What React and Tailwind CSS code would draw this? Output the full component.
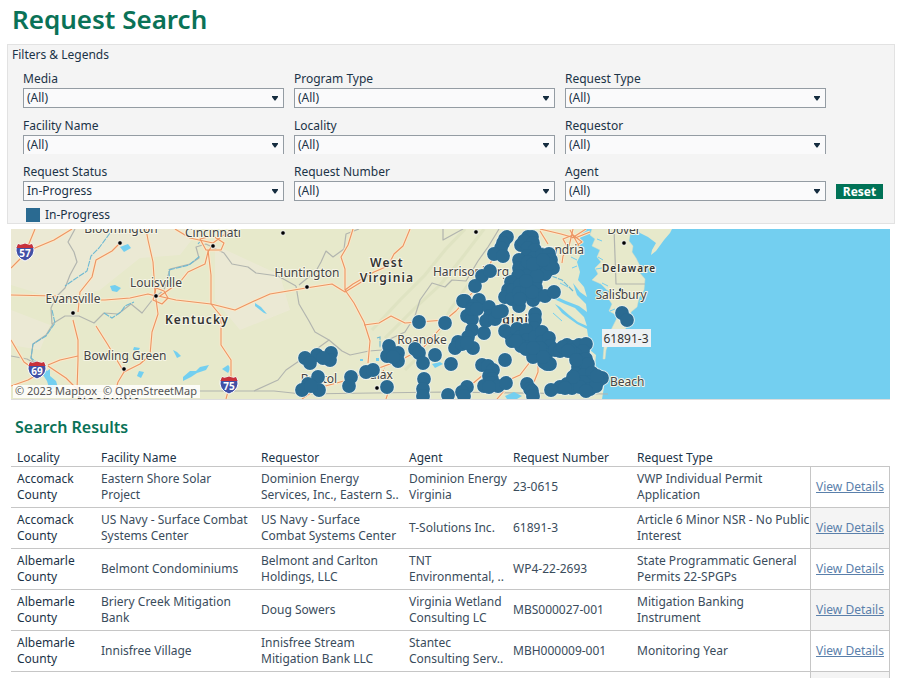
import React from "react";

const FILTERS = [
  { id: "media", label: "Media", value: "(All)" },
  { id: "program-type", label: "Program Type", value: "(All)" },
  { id: "request-type", label: "Request Type", value: "(All)" },
  { id: "facility", label: "Facility Name", value: "(All)", open: true },
  { id: "locality", label: "Locality", value: "(All)", open: true },
  { id: "requestor", label: "Requestor", value: "(All)", open: true },
  { id: "status", label: "Request Status", value: "In-Progress" },
  { id: "number", label: "Request Number", value: "(All)" },
  { id: "agent", label: "Agent", value: "(All)" },
];

const ROWS = [
  ["Accomack County", "Eastern Shore Solar Project", "Dominion Energy Services, Inc., Eastern S..", "Dominion Energy Virginia", "23-0615", "VWP Individual Permit Application"],
  ["Accomack County", "US Navy - Surface Combat Systems Center", "US Navy - Surface Combat Systems Center", "T-Solutions Inc.", "61891-3", "Article 6 Minor NSR - No Public Interest"],
  ["Albemarle County", "Belmont Condominiums", "Belmont and Carlton Holdings, LLC", "TNT Environmental, ..", "WP4-22-2693", "State Programmatic General Permits 22-SPGPs"],
  ["Albemarle County", "Briery Creek Mitigation Bank", "Doug Sowers", "Virginia Wetland Consulting LC", "MBS000027-001", "Mitigation Banking Instrument"],
  ["Albemarle County", "Innisfree Village", "Innisfree Stream Mitigation Bank LLC", "Stantec Consulting Serv..", "MBH000009-001", "Monitoring Year"],
];

const HEADERS = ["Locality", "Facility Name", "Requestor", "Agent", "Request Number", "Request Type"];

const DOTS = [
  [419, 322], [445, 323], [389, 346], [387, 356], [398, 353], [398, 361], [393, 357], [415, 349], [419, 353], [423, 363], [435, 355],
  [424, 379], [423, 389], [423, 396], [305, 358], [317, 355], [310, 363], [331, 353], [330, 360], [323, 358], [318, 377], [308, 384],
  [302, 390], [319, 390], [311, 386], [351, 377], [349, 386], [366, 372], [373, 370], [387, 387],
  [507, 237], [505, 239], [503, 243], [501, 248], [494, 254], [503, 256], [482, 276], [490, 271], [475, 286],
  [463, 301], [465, 301], [479, 300], [473, 306], [467, 316], [472, 319], [472, 309], [477, 309], [472, 330], [484, 333], [468, 337], [473, 348], [458, 342], [455, 348], [462, 344], [467, 343], [451, 364],
  [489, 307], [502, 311], [490, 316], [486, 321], [495, 319], [498, 312],
  [528, 237], [532, 237], [521, 245], [524, 241], [533, 243], [528, 248], [535, 250], [527, 256], [519, 260], [519, 268], [526, 267], [534, 258], [542, 255],
  [549, 254], [551, 260], [553, 268], [548, 270], [541, 264], [534, 270], [541, 272], [527, 276], [518, 276], [511, 282], [508, 290], [505, 297], [513, 290],
  [512, 299], [520, 285], [519, 293], [528, 284], [536, 280], [536, 288], [527, 294], [519, 306], [533, 300], [538, 295], [545, 296], [554, 292], [545, 274],
  [549, 264], [537, 276], [528, 262], [533, 264], [527, 288], [532, 292], [520, 299], [526, 281], [543, 260],
  [535, 314], [535, 320], [534, 328], [505, 331], [510, 334], [512, 341], [517, 329], [520, 337], [526, 330], [527, 340], [521, 346], [529, 347], [535, 337],
  [542, 332], [542, 342], [549, 338], [550, 346], [542, 350], [536, 354], [533, 357], [546, 355], [550, 364], [544, 362], [555, 350], [560, 351], [567, 345],
  [516, 341], [526, 349], [540, 348], [547, 364], [543, 357], [533, 348],
  [563, 347], [573, 347], [579, 345], [586, 344], [583, 351], [575, 354], [580, 360], [586, 359], [570, 350], [578, 367], [585, 367], [588, 364], [576, 374],
  [584, 375], [592, 373], [602, 378], [598, 381], [591, 382], [583, 382], [574, 381], [567, 384], [572, 388], [580, 387], [590, 389], [596, 386], [560, 387], [551, 390],
  [568, 351], [576, 360], [573, 377], [586, 391], [565, 388], [597, 376],
  [505, 360], [482, 365], [488, 366], [493, 370], [489, 376], [492, 379], [484, 386], [491, 383], [498, 386], [506, 383], [489, 387],
  [527, 384], [530, 389], [532, 391], [533, 396], [467, 387], [462, 392], [448, 395], [464, 396],
  [622, 313], [627, 320],
];

const ROADS = [
  "M11 268 L22 257 L35 248 L54 240 L72 229", "M35 229 L28 246", "M11 295 L55 296 L77 300 L105 300 L130 298 L148 294 L156 296",
  "M146 229 L148 240 L153 262 L155 292 L158 314 L152 332 L150 355 L140 364 L124 372 L118 382 L113 399",
  "M120 243 L112 251 L96 260 L92 277 L80 292 L78 312", "M73 320 L78 340 L78 360 L77 390 L84 399", "M96 326 L108 345 L118 362 L124 372",
  "M11 340 L24 362 L38 372", "M48 365 L60 360 L78 356", "M48 366 L66 378 L78 390", "M11 386 L28 380 L42 372",
  "M158 296 L176 300 L211 304 L235 310 L252 302 L270 294 L306 288 L332 284 L345 292 L363 281",
  "M160 296 L180 282 L188 272 L205 264 L208 252 L213 244", "M156 288 L164 291 L168 298 L162 304 L153 300 Z",
  "M208 250 L211 275 L211 304 L221 316 L221 345 L231 360 L231 380 L226 399", "M200 239 L213 236 L224 243 L221 250 L206 250 Z",
  "M213 243 L190 238 L175 229", "M213 243 L232 229",
  "M345 290 L353 284 L374 272 L388 266 L394 254 L403 246 L410 229",
  "M353 229 L348 245 L341 257 L345 269 L345 290 L354 303 L364 322 L370 341 L368 363",
  "M364 325 L379 323 L391 316 L405 323 L419 322 L445 320 L456 311 L480 284 L498 248",
  "M445 323 L423 348 L401 360 L368 372 L344 381 L318 388 L302 399", "M386 399 L391 384 L383 370",
  "M540 229 L561 234 L575 238 L590 232", "M540 231 L548 244", "M573 229 L571 238 L568 250 L563 256 L562 263", "M563 239 L573 235 L582 242 L569 250 Z", "M572 238 L586 229", "M570 230 L579 246",
  "M530 362 L520 375 L511 379", "M504 391 L497 399", "M538 363 L538 372 L534 382", "M458 399 L471 385 L489 370",
];

const BORDERS = [
  "M75 229 L68 242 L74 252 L77 262 L70 275 L65 288 L56 297 L51 308 L52 324 L65 316 L79 316 L94 323 L104 313 L118 314 L131 304 L142 313 L153 299 L164 290 L170 269 L190 264 L199 258 L196 247 L206 244 L224 253 L232 264 L248 267 L256 273 L278 276 L296 286",
  "M11 356 L27 359 L36 364", "M53 324 L46 335 L33 344 L31 358 L38 370", "M38 392 L131 391 L274 391 L302 394 L444 392 L608 394",
  "M296 286 L299 304 L309 321 L315 332 L329 340 L318 348 L286 370 L278 380 L254 391",
  "M299 285 L316 271 L321 262 L326 251 L333 257 L344 249 L346 234 L359 229",
  "M329 340 L342 351 L350 355 L369 351 L382 350 L390 339 L405 332 L415 316 L420 300 L432 283 L445 287 L452 280 L466 281 L478 261 L488 247 L496 234 L499 229",
  "M443 229 L443 240 L463 229", "M614 228 L616 284 L645 284",
];

const RIVERS = [
  "M110 233 L99 248 L91 256 L87 271 L75 279 L65 286", "M52 310 L55 323 L46 336 L33 344 L31 358 L45 369",
  "M170 284 L169 270 L189 265 L200 256", "M104 313 L112 318 L121 312 L125 306 L134 302", "M198 244 L202 239",
  "M377 338 L380 337 L380 348", "M390 363 L384 368", "M573 291 L562 280 L549 275",
];

const LAKES = [
  "M120 247 l8 -3 l3 4 l-7 4 z", "M110 286 l5 -1 l6 3 l-4 4 l-5 -1 z", "M42 367 l5 4 l3 -2 l0 7 l6 5 l3 10 l-5 -3 l-4 3 l-3 -10 l-4 -6 z",
  "M173 350 l4 2 l4 4 l-4 2 z", "M183 377 l7 -6 l6 0 l4 -4 l9 -2 l-3 5 l-9 3 l-6 4 l-8 4 z", "M139 371 l5 1 l-3 6 l-4 -2 z",
  "M222 369 l6 -4 l3 3 l-3 5 z", "M255 303 l6 4 l6 7 l-3 -1 l-9 -7 z", "M432 364 l8 -2 l3 2 l-8 4 z", "M134 347 l6 1 l-2 3 l-5 -1 z",
  "M376 358 l3 0 l0 3 l-3 0 z", "M505 396 l9 -4 l8 4 l-5 3 l-10 0 z", "M360 359 l3 0 l0 2 l-3 0 z", "M384 349 l4 0 l-1 3 l-3 0 z",
];

const CITIES = [
  [120, 243], [213, 246], [283, 233], [156, 296], [73, 313], [124, 369], [307, 287], [377, 388], [476, 232], [624, 243], [621, 290],
];

const LABELS = [
  [121, 233, "Bloomington"], [213, 237, "Cincinnati"], [156, 287, "Louisville"], [73, 303, "Evansville"], [125, 360, "Bowling Green"],
  [307, 277, "Huntington"], [422, 344, "Roanoke"], [471, 276, "Harrisonburg"], [554, 254, "Alexandria"], [624, 234, "Dover"],
  [621, 299, "Salisbury"], [319, 383, "Bristol"], [377, 379, "Galax"],
];

const SHIELDS = [[25, 252, "57"], [37, 370, "69"], [229, 385, "75"]];

function Filter({ id, label, value, open }) {
  return (
    <div className="flex min-w-0 flex-col">
      <label htmlFor={id} className="h-[18px] text-[12px] leading-[18px]">
        {label}
      </label>
      <div className="relative">
        <select
          id={id}
          defaultValue={value}
          className={`block w-full appearance-none rounded-none border border-[#949ca3] bg-[#fafafb] pl-[3px] text-[12px] leading-[18px] ${open ? "h-[19px] border-b-0" : "h-5"}`}
        >
          <option>{value}</option>
        </select>
        <svg className="pointer-events-none absolute right-[6px] top-2 h-[5px] w-[6px]" viewBox="0 0 6 5">
          <path d="M0 0h6v1L3.5 4.5h-1L0 1z" fill="#152c3f" />
        </svg>
      </div>
    </div>
  );
}

function VirginiaMap() {
  return (
    <svg
      viewBox="11 229 879 170"
      preserveAspectRatio="xMidYMid slice"
      role="img"
      aria-label="Map of requests"
      className="block h-[170px] w-full"
      fontFamily="'Noto Sans', sans-serif"
    >
      <rect x="11" y="229" width="879" height="170" fill="#e7e9cb" />
      <g fill="#efeadb" opacity=".6">
        <path d="M11 229 H200 L180 255 L140 258 L100 290 L60 300 L11 285 Z" />
        <path d="M215 245 L280 275 L290 310 L240 330 L215 300 Z" />
        <path d="M11 310 L50 325 L40 350 L11 345 Z" />
      </g>
      <g fill="none" stroke="#d8deba" strokeWidth="3" opacity=".5">
        <path d="M372 330 L400 300 L425 275 L445 250 L465 229" />
        <path d="M385 338 L415 308 L440 285 L462 258 L484 229" />
        <path d="M405 370 L435 340 L450 310 L475 275" />
      </g>
      <path
        fill="#73cff0"
        d="M890 229 H583 L580 238 L577 246 L581 254 L577 262 L580 272 L578 280 L584 287 L587 297 L580 292 L573 283 L577 295 L586 304 L587 312 L579 306 L566 301 L555 296 L554 299 L565 304 L575 308 L584 317 L587 326 L578 322 L569 315 L560 307 L555 304 L562 313 L570 319 L577 324 L587 329 L588 336 L592 342 L590 350 L596 355 L595 365 L602 375 L604 387 L602 399 H890 Z"
      />
      <path
        fill="#e7e9cb"
        stroke="#d8dfc4"
        strokeWidth=".5"
        d="M592 229 L590 235 L595 239 L592 246 L600 250 L597 257 L601 262 L595 268 L598 274 L592 280 L601 284 L607 290 L613 292 L608 298 L612 304 L609 311 L618 316 L614 324 L610 332 L606 340 L604 347 L603 359 L605 359 L606 350 L609 342 L616 336 L624 331 L630 321 L631 312 L637 307 L639 298 L644 290 L645 279 L639 272 L640 266 L636 258 L632 252 L633 246 L629 241 L631 229 Z"
      />
      <path fill="#e7e9cb" d="M637 229 L640 233 L648 237 L656 243 L652 250 L651 255 L656 251 L664 240 L670 233 L672 229 Z" />
      <g fill="none" stroke="#73cff0" strokeWidth="1">
        <path d="M598 257 l5 3 M596 269 l6 -1 M602 283 l6 3 M610 311 l5 -2 M572 268 l5 -2 M571 257 l6 3 M562 321 l-9 -8 M560 283 l8 4 M597 239 l5 2" />
      </g>
      <g fill="none" stroke="#b2b5af" strokeWidth="1.2" strokeLinejoin="round">
        {BORDERS.map((d) => <path key={d} d={d} />)}
      </g>
      <g fill="none" stroke="#6db9d3" strokeWidth="1.1" strokeDasharray="6 1">
        {RIVERS.map((d) => <path key={d} d={d} />)}
      </g>
      <g fill="#73cff0">
        {LAKES.map((d) => <path key={d} d={d} />)}
      </g>
      <g fill="none" stroke="#fbe8c9" strokeWidth="3" strokeLinejoin="round">
        {ROADS.map((d) => <path key={d} d={d} />)}
      </g>
      <g fill="none" stroke="#ec9563" strokeWidth="1.1" strokeLinejoin="round">
        {ROADS.map((d) => <path key={d} d={d} />)}
      </g>
      {CITIES.map(([x, y]) => (
        <circle key={`${x}-${y}`} cx={x} cy={y} r="2.3" fill="#000" stroke="#fff" strokeWidth=".8" />
      ))}
      <g fontSize="12" fill="#444" textAnchor="middle" stroke="#f6f5e6" strokeWidth="2" paintOrder="stroke" strokeLinejoin="round">
        {LABELS.map(([x, y, name]) => <text key={name} x={x} y={y}>{name}</text>)}
        <text x="610" y="386" textAnchor="start">Beach</text>
      </g>
      <g fontWeight="600" fill="#333" textAnchor="middle" stroke="#f6f5e6" strokeWidth="2" paintOrder="stroke">
        <text x="197" y="324" fontSize="12" className="tracking-widest">Kentucky</text>
        <text x="387" y="267" fontSize="12" className="tracking-widest">West</text>
        <text x="387" y="282" fontSize="12" className="tracking-widest">Virginia</text>
        <text x="510" y="324" fontSize="12" className="tracking-widest">Virginia</text>
        <text x="629" y="272" fontSize="10" className="tracking-widest">Delaware</text>
        <text x="109" y="405" fontSize="12" className="tracking-widest">Nashville</text>
      </g>
      {SHIELDS.map(([x, y, n]) => (
        <g key={n} transform={`translate(${x} ${y})`}>
          <path d="M-7 -8 Q-4 -6.500 0 -8.500 Q4 -6.500 7 -8 Q9.500 -5 9 -1 Q8 6 0 9 Q-8 6 -9 -1 Q-9.500 -5 -7 -8Z" fill="#4150a5" stroke="#fff" strokeWidth="1" />
          <path d="M-7 -8 Q-4 -6.500 0 -8.500 Q4 -6.500 7 -8 L8.500 -4 H-8.500Z" fill="#c9313a" />
          <text y="5" fontSize="10" fontWeight="700" fill="#fff" textAnchor="middle">{n}</text>
        </g>
      ))}
      <g fill="#e9f1f0">
        {DOTS.map(([x, y]) => <circle key={`${x}-${y}`} cx={x} cy={y} r="7.8" />)}
      </g>
      <g fill="#2a6a91">
        {DOTS.map(([x, y]) => <circle key={`${x}-${y}`} cx={x} cy={y} r="6.9" />)}
      </g>
      <rect x="602" y="329" width="49" height="18" fill="#edf1f4" />
      <text x="626" y="343" fontSize="12" fill="#333" textAnchor="middle">61891-3</text>
      <rect x="13" y="385" width="187" height="13" fill="#fff" opacity=".85" />
      <text x="15" y="395" fontSize="11" fill="#555">© 2023 Mapbox</text>
      <text x="103" y="395" fontSize="11" fill="#555">© OpenStreetMap</text>
    </svg>
  );
}

export default function App() {
  return (
    <main className="bg-white font-['Noto_Sans',sans-serif] text-[#1b3347]">
      <h1 className="h-11 pl-3 text-[26px] font-semibold leading-[38px] text-[#0a7257]">Request Search</h1>

      <section className="ml-[7px] mr-[6px] border border-[#e2e2e2] bg-[#f4f4f4]">
        <h2 className="pl-1 text-[12px] leading-[20px]">Filters &amp; Legends</h2>
        <div className="flex items-end gap-[10px] pl-[15px] pr-[11px] pt-[5px]">
          <div className="grid flex-1 grid-cols-3 gap-x-[10px] gap-y-[9px]">
            {FILTERS.map((f) => <Filter key={f.id} {...f} />)}
          </div>
          <button type="button" className="mb-[2px] h-[15px] w-[47px] bg-[#007256] text-[12px] font-bold leading-[15px] text-white">
            Reset
          </button>
        </div>
        <div className="flex h-[22px] items-end gap-[5px] pl-[18px] text-[12px] leading-[16px]">
          <span className="mb-px h-[14px] w-[14px] bg-[#2a6a91]" />
          <span>In-Progress</span>
        </div>
      </section>

      <section className="ml-[11px] mr-[11px] mt-[5px] border-b border-[#ddd]">
        <VirginiaMap />
      </section>

      <section className="mx-[11px] pt-[15px]">
        <h2 className="pl-1 text-[16px] font-semibold leading-[24px] text-[#0a7257]">Search Results</h2>
        <table className="mt-2 w-full table-fixed border-collapse text-left text-[12px] leading-[16px]">
          <colgroup>
            <col className="w-[84px]" />
            <col className="w-[160px]" />
            <col className="w-[148px]" />
            <col className="w-[104px]" />
            <col className="w-[124px]" />
            <col />
            <col className="w-[79px]" />
          </colgroup>
          <thead>
            <tr className="h-[19px] border-b border-[#c6c6c6]">
              {HEADERS.map((h) => (
                <th key={h} scope="col" className="p-0 pl-[6px] pt-[3px] font-normal">{h}</th>
              ))}
              <td className="p-0" />
            </tr>
          </thead>
          <tbody>
            {ROWS.map((row, i) => (
              <tr key={row[4]} className="h-[41px] border-b border-[#c6c6c6]">
                {row.map((cell, j) => (
                  <td key={j} className={`p-0 pl-[6px] ${j === 0 ? "text-[#1b3347]" : "text-[#3a4c5c]"} ${j === 1 ? "pr-1" : ""}`}>{cell}</td>
                ))}
                <td className={`border-x border-[#c6c6c6] p-0 text-center ${i % 2 ? "bg-[#f4f4f4]" : ""}`}>
                  <a href="#details" className="whitespace-nowrap text-[#5a80ab] underline underline-offset-1">View Details</a>
                </td>
              </tr>
            ))}
            <tr className="h-[6px]">
              <td colSpan={6} className="p-0" />
              <td className="border-x border-[#c6c6c6] bg-[#f4f4f4] p-0" />
            </tr>
          </tbody>
        </table>
      </section>
    </main>
  );
}
